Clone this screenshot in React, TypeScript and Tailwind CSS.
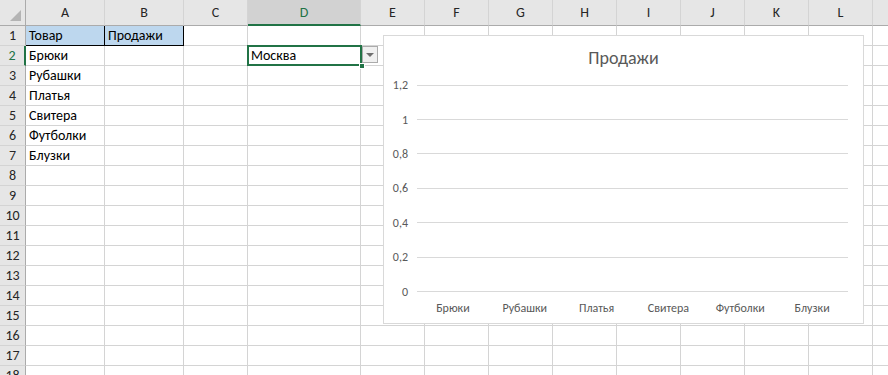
import React from "react";

const colW = [79, 79, 64, 113, 64, 64, 64, 64, 64, 64, 64, 64, 16];
const colNames = ["A", "B", "C", "D", "E", "F", "G", "H", "I", "J", "K", "L", "M"];
const colA = ["Товар", "Брюки", "Рубашки", "Платья", "Свитера", "Футболки", "Блузки"];
const cats = ["Брюки", "Рубашки", "Платья", "Свитера", "Футболки", "Блузки"];
const yLabels = ["1,2", "1", "0,8", "0,6", "0,4", "0,2", "0"];

const font = { fontFamily: "Calibri, Carlito, 'Liberation Sans', Arial, sans-serif" };

function HeaderRow() {
  return (
    <div className="flex h-[26px] bg-[#e6e6e6]">
      <div className="relative w-[26px] shrink-0 border-r border-b border-[#ababab]">
        <div
          className="absolute right-[4px] bottom-[4px] w-0 h-0 border-l-[11px] border-t-[11px] border-l-transparent border-t-transparent border-b-[11px] border-b-[#b4b4b4]"
          style={{ borderRightWidth: 0 }}
        />
      </div>
      {colNames.map((n, i) => {
        const sel = n === "D";
        return (
          <div
            key={n}
            style={{ width: colW[i] }}
            className={
              "shrink-0 flex items-center justify-center text-[14px] border-r border-[#d4d4d4] " +
              (sel
                ? "bg-[#d2d2d2] text-[#217346] border-b-2 border-b-[#217346]"
                : "text-[#262626] border-b border-b-[#ababab]")
            }
          >
            {n === "M" ? "" : n}
          </div>
        );
      })}
    </div>
  );
}

function Row({ r }: { r: number }) {
  const aText = colA[r - 1] ?? "";
  return (
    <div className="flex h-[20px]">
      <div
        className={
          "w-[26px] shrink-0 flex items-center justify-center text-[14px] bg-[#e6e6e6] border-b border-[#d4d4d4] " +
          (r === 2
            ? "text-[#217346] border-r-2 border-r-[#217346]"
            : "text-[#262626] border-r border-r-[#ababab]")
        }
      >
        {r}
      </div>
      {colNames.map((n, i) => {
        let content: React.ReactNode = null;
        let cls = "border-r border-b border-[#d4d4d4]";
        if (n === "A") content = aText;
        if (r === 1 && (n === "A" || n === "B")) {
          cls = "bg-[#bdd7ee] border-r border-b border-[#000000]";
          if (n === "B") content = "Продажи";
        }
        return (
          <div
            key={n}
            style={{ width: colW[i] }}
            className={"shrink-0 relative flex items-center pl-[3px] text-[14px] text-black overflow-visible whitespace-nowrap " + cls}
          >
            {content}
          </div>
        );
      })}
    </div>
  );
}

function Chart() {
  return (
    <div
      className="absolute left-[383px] top-[35px] w-[481px] h-[289px] bg-white border border-[#d9d9d9] flex flex-col"
      style={font}
    >
      <div className="h-[32px] shrink-0 pt-[12px] text-center leading-[20px] text-[18px] text-[#595959]">
        Продажи
      </div>
      <div className="flex flex-col shrink-0">
        {yLabels.map((l) => (
          <div key={l} className="flex items-center h-[34.4px] shrink-0">
            <div className="w-[24px] text-right text-[12px] text-[#595959] leading-none">{l}</div>
            <div className="ml-[9px] w-[431px] h-px bg-[#d9d9d9]" />
          </div>
        ))}
      </div>
      <div className="flex shrink-0 ml-[33px] w-[431px] -mt-[9px] leading-[16px]">
        {cats.map((c) => (
          <div key={c} className="flex-1 text-center text-[12px] text-[#595959]">
            {c}
          </div>
        ))}
      </div>
    </div>
  );
}

export default function App() {
  return (
    <div className="relative w-[888px] h-[375px] overflow-hidden bg-white" style={font}>
      <HeaderRow />
      {Array.from({ length: 18 }, (_, i) => (
        <Row key={i} r={i + 1} />
      ))}
      {/* Selected cell D2 */}
      <div className="absolute left-[247px] top-[45px] w-[115px] h-[21px] border-2 border-[#217346] flex items-center pl-[2px] text-[14px] text-black">
        Москва
        <div className="absolute right-[-5px] bottom-[-5px] w-[6px] h-[6px] bg-[#217346] border border-white" />
      </div>
      {/* Dropdown button */}
      <div className="absolute left-[362px] top-[46px] w-[16px] h-[17px] bg-[#f0f0f0] border border-[#ababab] flex items-center justify-center">
        <div className="w-0 h-0 border-l-[4px] border-r-[4px] border-t-[4px] border-l-transparent border-r-transparent border-t-[#6e6e6e]" />
      </div>
      <Chart />
    </div>
  );
}
